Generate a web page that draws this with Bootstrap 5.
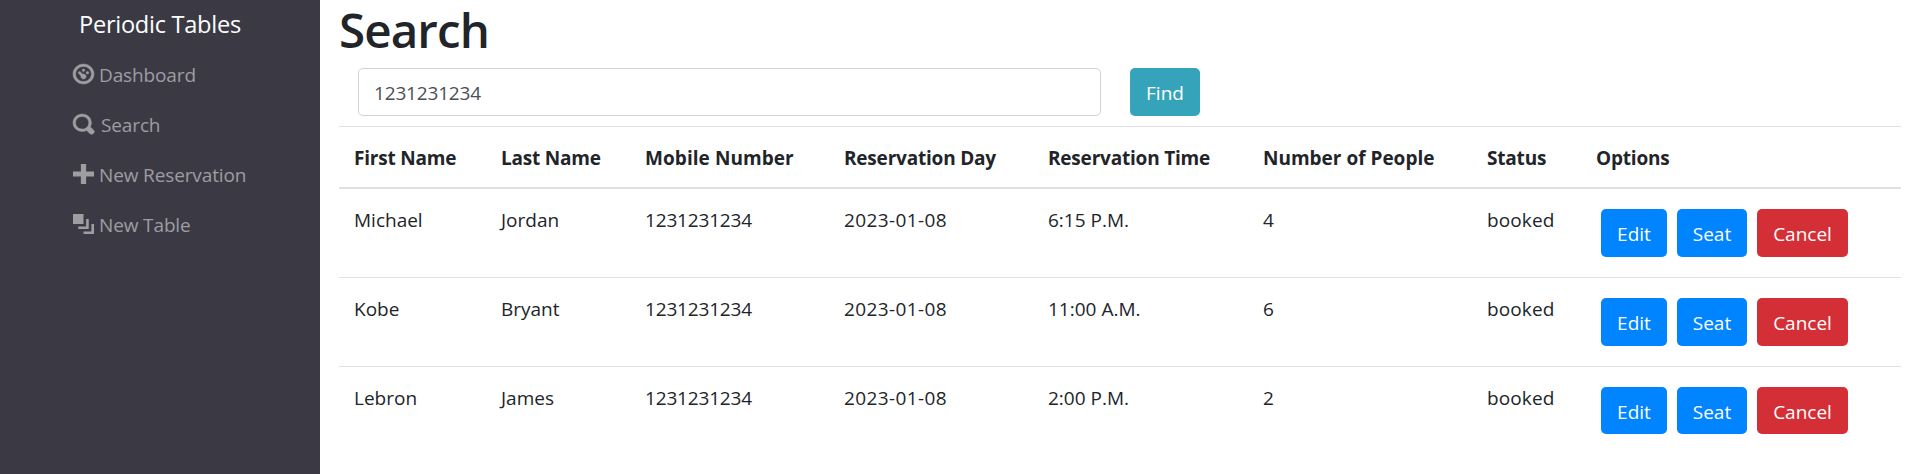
<!DOCTYPE html>
<html lang="en">
<head>
<meta charset="utf-8">
<title>Periodic Tables</title>
<link href="https://cdn.jsdelivr.net/npm/bootstrap@5.3.0/dist/css/bootstrap.min.css" rel="stylesheet">
<style>
body{font-family:"Open Sans","Noto Sans",sans-serif;font-size:19px;line-height:30px;color:#212529;overflow:hidden}
.side{width:320px;height:474px;background:#3b3a44}
.brand{font-size:23.6px;line-height:30px;color:#fff;padding:9px 0 11px 79px;letter-spacing:-.28px}
.side .nav-link{height:50px;padding:10px 0 10px 73px;color:#9d9da2;line-height:30px;white-space:nowrap;letter-spacing:-.13px}
.side svg{width:21px;height:20px;fill:currentColor;stroke:currentColor;stroke-width:.18;margin:-2px 5px 0 0;flex:none;overflow:visible}
.side .solid{stroke:none}
.side .search-label{padding-left:2px}
.main{padding:0 19px}
h1{font-size:47.5px;line-height:60px;font-weight:600;margin:0 0 8px;letter-spacing:-.9px}
.search-form{padding-left:19px}
.phone{width:743px;height:48px;font-size:19px;line-height:30px;color:#495057;border:1px solid #ced4da;border-radius:5px;padding:9px 15px 7px;letter-spacing:-.17px}
.btn{font-size:19px;line-height:30px;height:48px;padding:9px 0 7px;border:0;border-radius:5px;color:#fff;text-align:center}
.find{background:#35a3ba;width:70px;margin-left:29px}
.blue{background:#0084ff}.red{background:#d42f36}
.edit{width:66px}.seat{width:70px}.cancel{width:91px}
.grid-table{table-layout:fixed;width:1562px;margin:10px 0 0;border-collapse:separate;border-spacing:0}
.grid-table th,.grid-table td{padding:16px 0 0 15px;vertical-align:top;border:0;border-top:1px solid #dee2e6;white-space:nowrap;color:#212529}
.grid-table th{height:63px;border-bottom:2px solid #dee2e6;letter-spacing:-.2px}
.grid-table th:nth-child(3){letter-spacing:.06px}
.grid-table th:nth-child(6){letter-spacing:0}
.grid-table td{height:89px}
.grid-table td:nth-child(3){letter-spacing:-.17px}
.grid-table td:nth-child(4){letter-spacing:.38px}
.grid-table td:nth-child(7){letter-spacing:.12px}
.grid-table tbody tr:first-child td{height:88px;border-top:0}
.grid-table tbody tr:last-child .btn{height:47px}
.opts{padding:4px 0 0 5px;gap:10px;letter-spacing:0}
</style>
</head>
<body>
<div class="d-flex">
<nav class="side flex-shrink-0">
<div class="brand"><span>Periodic Tables</span></div>
<div class="nav flex-column flex-nowrap">
<a class="nav-link d-flex align-items-center" href="#"><svg viewBox="0 0 8 8" preserveAspectRatio="none"><path d="M4 0c-2.2 0-4 1.8-4 4s1.8 4 4 4 4-1.8 4-4-1.8-4-4-4zm0 1c1.66 0 3 1.34 3 3s-1.34 3-3 3-3-1.34-3-3 1.34-3 3-3zm0 1c-.28 0-.5.22-.5.5s.22.5.5.5.5-.22.5-.5-.22-.5-.5-.5zm-1.66 1a.5.5 0 0 0-.19.84l.91.91c-.02.08-.06.16-.06.25 0 .55.45 1 1 1s1-.45 1-1-.45-1-1-1c-.09 0-.17.04-.25.06l-.91-.91a.5.5 0 0 0-.44-.16.5.5 0 0 0-.06 0zm3.16 0c-.28 0-.5.22-.5.5s.22.5.5.5.5-.22.5-.5-.22-.5-.5-.5z"/></svg><span>Dashboard</span></a>
<a class="nav-link d-flex align-items-center" href="#"><svg viewBox="0 0 8 8" preserveAspectRatio="none"><path d="M3.5 0c-1.93 0-3.5 1.57-3.5 3.5s1.57 3.5 3.5 3.5c.59 0 1.17-.14 1.66-.41a1 1 0 0 0 .13.13l1 1a1.02 1.02 0 1 0 1.44-1.44l-1-1a1 1 0 0 0-.16-.13c.27-.49.44-1.06.44-1.66 0-1.93-1.55-3.5-3.5-3.5zm0 1c1.39 0 2.5 1.11 2.5 2.5 0 .66-.24 1.27-.66 1.72l-.03.03a1 1 0 0 0-.13.13c-.44.4-1.04.63-1.69.63-1.39 0-2.5-1.11-2.5-2.5s1.11-2.5 2.5-2.5z"/></svg><span class="search-label">Search</span></a>
<a class="nav-link d-flex align-items-center" href="#"><svg class="solid" viewBox="0 0 8 8" preserveAspectRatio="none"><path d="M3 0v3h-3v2h3v3h2v-3h3v-2h-3v-3h-2z"/></svg><span>New Reservation</span></a>
<a class="nav-link d-flex align-items-center" href="#"><svg class="solid" viewBox="0 0 8 8" preserveAspectRatio="none"><path d="M0 0v4h4v-4h-4zm5 2v3h-3v1h4v-4h-1zm2 2v3h-3v1h4v-4h-1z"/></svg><span>New Table</span></a>
</div>
</nav>
<main class="main flex-grow-1">
<h1>Search</h1>
<form class="d-flex search-form"><input class="form-control phone" value="1231231234"><button type="button" class="btn find">Find</button></form>
<table class="table grid-table">
<colgroup><col style="width:147px"><col style="width:144px"><col style="width:199px"><col style="width:204px"><col style="width:215px"><col style="width:224px"><col style="width:109px"><col style="width:320px"></colgroup>
<thead><tr><th>First Name</th><th>Last Name</th><th>Mobile Number</th><th>Reservation Day</th><th>Reservation Time</th><th>Number of People</th><th>Status</th><th>Options</th></tr></thead>
<tbody>
<tr><td>Michael</td><td>Jordan</td><td>1231231234</td><td>2023-01-08</td><td>6:15 P.M.</td><td>4</td><td>booked</td><td><div class="d-flex opts"><button class="btn blue edit">Edit</button><button class="btn blue seat">Seat</button><button class="btn red cancel">Cancel</button></div></td></tr>
<tr><td>Kobe</td><td>Bryant</td><td>1231231234</td><td>2023-01-08</td><td>11:00 A.M.</td><td>6</td><td>booked</td><td><div class="d-flex opts"><button class="btn blue edit">Edit</button><button class="btn blue seat">Seat</button><button class="btn red cancel">Cancel</button></div></td></tr>
<tr><td>Lebron</td><td>James</td><td>1231231234</td><td>2023-01-08</td><td>2:00 P.M.</td><td>2</td><td>booked</td><td><div class="d-flex opts"><button class="btn blue edit">Edit</button><button class="btn blue seat">Seat</button><button class="btn red cancel">Cancel</button></div></td></tr>
</tbody>
</table>
</main>
</div>
<script src="https://cdn.jsdelivr.net/npm/bootstrap@5.3.0/dist/js/bootstrap.bundle.min.js"></script>
</body>
</html>
